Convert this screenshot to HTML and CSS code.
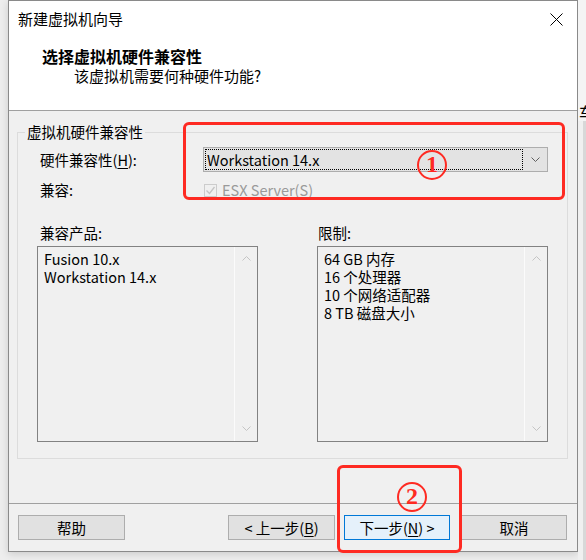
FILE: index.html
```html
<!DOCTYPE html>
<html lang="zh-CN">
<head>
<meta charset="utf-8">
<title>新建虚拟机向导</title>
<link rel="stylesheet" href="styles.css">
</head>
<body>
<div class="desk">
  <div class="window">
    <div class="head">
      <div class="titlebar">
        <span class="title">新建虚拟机向导</span>
        <svg class="close" width="13" height="13" viewBox="0 0 13 13"><path d="M0.5 0.5L12.5 12.5M12.5 0.5L0.5 12.5" stroke="#000" stroke-width="1" fill="none"/></svg>
      </div>
      <div class="heading">选择虚拟机硬件兼容性</div>
      <div class="sub">该虚拟机需要何种硬件功能?</div>
    </div>
    <div class="content">
      <div class="group">
        <div class="group-title">虚拟机硬件兼容性</div>
        <div class="row row-combo">
          <span class="label">硬件兼容性(<u>H</u>):</span>
          <div class="combo">
            <span class="combo-focus">Workstation 14.x</span>
            <span class="combo-arrow"><svg width="9" height="5" viewBox="0 0 9 5"><path d="M0.5 0.5L4.5 4.5L8.5 0.5" stroke="#606060" fill="none"/></svg></span>
          </div>
        </div>
        <div class="row row-check">
          <span class="label">兼容:</span>
          <span class="check"><svg width="11" height="11" viewBox="0 0 11 11"><path d="M1.5 5.5L4.5 8.5L9.5 2" stroke="#c4c4c4" stroke-width="1.3" fill="none"/></svg></span>
          <span class="check-text">ESX Server(S)</span>
        </div>
        <div class="lists">
          <div class="col">
            <div class="col-label">兼容产品:</div>
            <div class="listbox">
              <div class="items">
                <div class="item">Fusion 10.x</div>
                <div class="item">Workstation 14.x</div>
              </div>
              <div class="scroll">
                <svg width="9" height="5" viewBox="0 0 9 5"><path d="M0.5 4.5L4.5 0.5L8.5 4.5" stroke="#c4c4c4" fill="none"/></svg>
                <svg width="9" height="5" viewBox="0 0 9 5"><path d="M0.5 0.5L4.5 4.5L8.5 0.5" stroke="#c4c4c4" fill="none"/></svg>
              </div>
            </div>
          </div>
          <div class="col col-right">
            <div class="col-label">限制:</div>
            <div class="listbox">
              <div class="items">
                <div class="item">64 GB 内存</div>
                <div class="item">16 个处理器</div>
                <div class="item">10 个网络适配器</div>
                <div class="item">8 TB 磁盘大小</div>
              </div>
              <div class="scroll">
                <svg width="9" height="5" viewBox="0 0 9 5"><path d="M0.5 4.5L4.5 0.5L8.5 4.5" stroke="#c4c4c4" fill="none"/></svg>
                <svg width="9" height="5" viewBox="0 0 9 5"><path d="M0.5 0.5L4.5 4.5L8.5 0.5" stroke="#c4c4c4" fill="none"/></svg>
              </div>
            </div>
          </div>
        </div>
      </div>
    </div>
    <div class="footer">
      <button class="btn btn-help">帮助</button>
      <span class="spacer"></span>
      <button class="btn btn-back">&lt; 上一步(<u>B</u>)</button>
      <button class="btn btn-next">下一步(<u>N</u>) &gt;</button>
      <button class="btn btn-cancel">取消</button>
    </div>
  </div>
  <div class="edge">
    <div class="edge-top"></div>
    <div class="edge-char">车</div>
    <div class="edge-rest"></div>
  </div>
</div>
<div class="mark mark-1"></div>
<div class="mark mark-2"></div>
<div class="num num-1">1</div>
<div class="num num-2">2</div>
</body>
</html>
```
FILE: styles.css
```css
* { box-sizing: border-box; }
html, body { margin: 0; padding: 0; }
body {
  width: 586px;
  height: 560px;
  overflow: hidden;
  background: #eeeeee;
  font-family: "Noto Sans CJK SC", "Microsoft YaHei", sans-serif;
  font-size: 14.5px;
  color: #000;
}
.desk { display: flex; padding-left: 8px; height: 560px; }
.window {
  width: 570px;
  height: 552px;
  flex: none;
  border: 1px solid #8a8a8a;
  background: #f0f0f0;
  display: flex;
  flex-direction: column;
  box-shadow: 0 2px 8px rgba(0, 0, 0, 0.15);
}
.head { background: #fff; border-bottom: 1px solid #a0a0a0; padding: 8px 0 24px; }
.titlebar {
  display: flex;
  justify-content: space-between;
  align-items: center;
  height: 20px;
  padding: 0 14px 0 9px;
}
.title { font-size: 15px; line-height: 20px; }
.close { display: block; }
.heading { margin-top: 17px; padding-left: 33px; font-weight: bold; font-size: 16px; line-height: 20px; }
.sub { padding-left: 65px; font-size: 15px; line-height: 20px; }

.content { padding: 21px 9px 44px 8px; }
.group { border: 1px solid #dcdcdc; padding: 0 0 16px 0; }
.group-title {
  width: fit-content;
  margin: -11px 0 0 7px;
  padding: 0 2px;
  line-height: 20px;
  background: #f0f0f0;
}
.row { display: flex; align-items: center; padding-left: 22px; }
.row-combo { margin-top: 5px; height: 25px; }
.label { width: 163px; flex: none; line-height: 20px; }
.combo {
  width: 345px;
  height: 25px;
  border: 1px solid #adadad;
  background: #e3e3e3;
  display: flex;
  align-items: center;
}
.combo-focus {
  width: 318px;
  height: 21px;
  margin-left: 1px;
  border: 1px dotted #000;
  padding-left: 1px;
  line-height: 19px;
}
.combo-arrow { flex: 1; display: flex; justify-content: center; align-items: center; }
.combo-arrow svg { display: block; }
.row-check { margin-top: 6px; height: 24px; }
.check {
  width: 13px;
  height: 13px;
  margin-left: 1px;
  border: 1px solid #cccccc;
  background: #f0f0f0;
  display: flex;
}
.check-text { margin-left: 5px; color: #9a9a9a; line-height: 20px; }

.lists {
  display: grid;
  grid-template-columns: 221px 231px;
  column-gap: 59px;
  margin: 22px 19px 0;
}
.col-label { line-height: 18px; padding-left: 3px; }
.col-right .col-label { padding-left: 1px; }
.listbox {
  margin-top: 4px;
  height: 196px;
  border: 1px solid #828282;
  display: flex;
}
.items { flex: 1; padding: 3px 6px; }
.item { height: 18px; line-height: 18px; }
.scroll {
  width: 23px;
  flex: none;
  border-left: 1px solid #fbfbfb;
  display: flex;
  flex-direction: column;
  align-items: center;
  justify-content: space-between;
  padding: 9px 0 10px;
}
.scroll svg { display: block; }

.footer {
  border-top: 1px solid #a0a0a0;
  padding: 11px 10px 11px 9px;
  display: flex;
}
.spacer { flex: 1; }
.btn {
  height: 25px;
  border: 1px solid #adadad;
  background: #e1e1e1;
  font: inherit;
  color: #000;
  padding: 0;
  line-height: 23px;
  text-align: center;
}
.btn-help { width: 107px; }
.btn-back { width: 107px; margin-right: 9px; }
.btn-next { width: 106px; margin-right: 11px; border-color: #0078d7; background: #e5f1fb; }
.btn-cancel { width: 106px; }
u { text-decoration-thickness: 1px; text-underline-offset: 2px; }

.edge { width: 8px; flex: none; display: flex; flex-direction: column; overflow: hidden; background: #f4f4f4; }
.edge-top { height: 103px; }
.edge-char { line-height: 18px; font-size: 16px; margin-left: 1px; white-space: nowrap; }
.edge-rest { flex: 1; background: linear-gradient(to right, #f0f0f0 5px, #d8d8d8 5px); }

.mark {
  position: absolute;
  border: 3px solid #fe2a22;
  border-radius: 6px;
}
.mark-1 { left: 183px; top: 122px; width: 382px; height: 78px; }
.mark-2 { left: 337px; top: 465px; width: 125px; height: 88px; }
.num {
  position: absolute;
  width: 30px;
  height: 30px;
  border: 2px solid #fe2a22;
  border-radius: 50%;
  color: #fe2a22;
  font-family: "Liberation Serif", serif;
  font-size: 24px;
  font-weight: bold;
  line-height: 25px;
  text-align: center;
}
.num-1 { left: 417px; top: 150px; }
.num-2 { left: 397px; top: 482px; }
```
